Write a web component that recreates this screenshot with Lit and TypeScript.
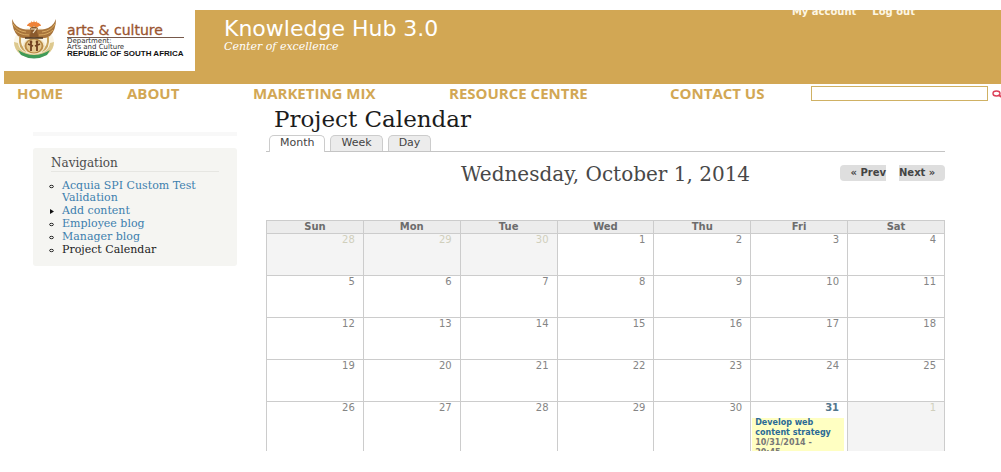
import { LitElement, html, css, svg } from "lit";
import { customElement } from "lit/decorators.js";
import { classMap } from "lit/directives/class-map.js";

interface Day {
  n: number;
  outside?: boolean;
  event?: { title: string; time: string };
}

const DAY_NAMES = ["Sun", "Mon", "Tue", "Wed", "Thu", "Fri", "Sat"];

function buildWeeks(): Day[][] {
  const days: Day[] = [28, 29, 30].map((n) => ({ n, outside: true }));
  for (let n = 1; n <= 31; n++) days.push({ n });
  days[days.length - 1].event = {
    title: "Develop web content strategy",
    time: "10/31/2014 - 20:45",
  };
  days.push({ n: 1, outside: true });
  const weeks: Day[][] = [];
  for (let i = 0; i < days.length; i += 7) weeks.push(days.slice(i, i + 7));
  return weeks;
}

@customElement("coat-of-arms")
class CoatOfArms extends LitElement {
  static styles = css`
    :host { display: block; }
    svg { display: block; width: 46px; height: 41px; }
  `;
  render() {
    const rays = [-75, -50, -25, 0, 25, 50, 75].map(
      (a) => svg`<path d="M21.500 5 L23 -1 L24.500 5 Z" transform="translate(0 3) rotate(${a} 23 6) " fill="#f08a34"/>`
    );
    return html`<svg viewBox="0 0 46 41" aria-hidden="true">
      <ellipse cx="23" cy="24" rx="20" ry="15" fill="#faf5e6"/>
      <path d="M3 24 C3 34 12 40 23 40 C34 40 43 34 43 24 L39 25 C38 32 32 36 23 36 C14 36 8 32 7 25 Z" fill="#ddc98e"/>
      <path d="M7 32 Q23 42 39 32 L36 37 Q23 44 10 37 Z" fill="#3f9a58"/>
      <path d="M9 19 Q8 30 15 33 M37 19 Q38 30 31 33" fill="none" stroke="#c9a45d" stroke-width="2"/>
      ${rays}<path d="M16 8 a7 4 0 0 1 14 0 Z" fill="#ee8238"/>
      <path d="M1 1 Q4 9 12 11 Q18 12 21 11 L22 19 Q13 22 7 18 Q1 12 1 1 Z" fill="#a8743b"/>
      <path d="M45 1 Q42 9 34 11 Q28 12 25 11 L24 19 Q33 22 39 18 Q45 12 45 1 Z" fill="#a8743b"/>
      <path d="M2 6 Q6 13 15 14 M4 12 Q9 17 18 17 M44 6 Q40 13 31 14 M42 12 Q37 17 28 17" fill="none" stroke="#d8ab62" stroke-width="1"/>
      <path d="M19 10 Q23 7 27 10 L26 13 L28 21 L18 21 L20 13 Z" fill="#8b5a2c"/>
      <path d="M20 11 L25 11 L22 15" fill="none" stroke="#f0dfc0" stroke-width="1.200"/>
      <ellipse cx="23" cy="28" rx="11" ry="8.500" fill="#f3e6c4"/>
      <ellipse cx="23" cy="28" rx="9.500" ry="7.500" fill="#b98a45"/>
      <ellipse cx="23" cy="28" rx="7.500" ry="6.500" fill="#e6c98f"/>
      <path d="M20 24 V33 M26 24 V33 M17 26 L22 28 M29 26 L24 28" stroke="#70401f" stroke-width="1.800"/>
      <circle cx="20" cy="24" r="1.400" fill="#70401f"/>
      <circle cx="26" cy="24" r="1.400" fill="#70401f"/>
      <path d="M14 20 H32" stroke="#4b3420" stroke-width="1.500"/>
    </svg>`;
  }
}

@customElement("site-header")
class SiteHeader extends LitElement {
  static styles = css`
    :host { display: block; font-family: "DejaVu Sans", sans-serif; }
    .banner { display: flex; background: #d2a754; margin-left: 4px; color: #fff; padding-bottom: 13px; overflow: hidden; }
    .logo { box-sizing: border-box; width: 191px; height: 61px; background: #fff; display: flex; gap: 10px; padding: 8px 0 0 7px; }
    .logo-text { color: #333; padding-top: 5px; white-space: nowrap; }
    .brand { font: 14px/14px "DejaVu Sans", sans-serif; color: #9a5430; -webkit-text-stroke: 0.3px #9a5430; border-bottom: 1px solid #76584a; margin-bottom: 1px; }
    .dept { display: block; font: 7px/5px "DejaVu Sans", sans-serif; padding-bottom: 1px; }
    .republic { font: bold 8px/6px "Liberation Sans", sans-serif; color: #111; }
    .site { flex: 1; padding: 8px 0 0 29px; }
    h1 { font-weight: normal; font-size: 22px; line-height: 22px; margin: 0 0 1px; }
    .slogan { font: italic 11px/12px "DejaVu Serif", serif; margin: 0; }
    .account { display: flex; gap: 16px; margin: -4px 86px 0 0; font-weight: bold; font-size: 10px; line-height: 12px; }
    .account a { color: #fdf6e4; text-decoration: none; }
    .menu { display: grid; grid-template-columns: 110fr 126fr 196fr 221fr 141fr 177fr 13px; align-items: center; padding-left: 17px; height: 19px; font: bold 15px/16px "Open Sans", sans-serif; }
    .menu a { color: #d2a754; text-decoration: none; white-space: nowrap; padding-bottom: 2px; }
    input { box-sizing: border-box; width: 100%; height: 15px; border: 1px solid #cfb164; background: #fff; padding: 0 4px; font-size: 10px; display: block; }
    button { border: 0; background: none; padding: 0 0 0 4px; overflow: hidden; display: block; height: 12px; }
    button svg { display: block; }
  `;
  render() {
    return html`
      <header class="banner">
        <div class="logo">
          <coat-of-arms></coat-of-arms>
          <div class="logo-text">
            <div class="brand">arts &amp; culture</div>
            <span class="dept">Department:</span>
            <span class="dept">Arts and Culture</span>
            <div class="republic">REPUBLIC OF SOUTH AFRICA</div>
          </div>
        </div>
        <div class="site">
          <h1>Knowledge Hub 3.0</h1>
          <p class="slogan">Center of excellence</p>
        </div>
        <nav class="account"><a href="#account">My account</a><a href="#logout">Log out</a></nav>
      </header>
      <nav class="menu">
        ${["HOME", "ABOUT", "MARKETING MIX", "RESOURCE CENTRE", "CONTACT US"].map(
          (t) => html`<a href="#">${t}</a>`
        )}
        <input type="text" aria-label="Search" />
        <button aria-label="Submit search">
          <svg width="12" height="12" viewBox="0 0 12 12"><ellipse cx="4.500" cy="5.500" rx="3.500" ry="2.500" fill="none" stroke="#dc4058" stroke-width="1.400"/><path d="M6.500 7 L11 10" stroke="#dc4058" stroke-width="2"/></svg>
        </button>
      </nav>`;
  }
}

@customElement("side-nav")
class SideNav extends LitElement {
  static styles = css`
    :host { display: block; font: 11px/12px "DejaVu Serif", serif; padding-top: 29px; }
    .rule { height: 4px; background: #f8f8f8; margin-bottom: 12px; }
    .box { background: #f5f5f2; border-radius: 3px; padding: 8px 18px 10px; }
    h2 { font-weight: normal; font-size: 12px; line-height: 15px; color: #4c4c4c; margin: 0; border-bottom: 1px solid #e6e6e2; }
    ul { list-style: none; margin: 8px -10px 0 -2px; padding: 0; }
    li { display: flex; gap: 8px; margin-bottom: 1px; }
    li:last-child { margin-bottom: 0; }
    li svg { flex: none; width: 5px; height: 12px; }
    a { color: #3d7fae; text-decoration: none; }
    a.active { color: #222; }
  `;
  render() {
    const items = ["Acquia SPI Custom Test Validation", "Add content", "Employee blog", "Manager blog", "Project Calendar"];
    return html`
      <div class="rule"></div>
      <nav class="box">
        <h2>Navigation</h2>
        <ul>
          ${items.map(
            (t, i) => html`<li>
              <svg viewBox="0 0 5 12" aria-hidden="true">
                ${i === 1
                  ? svg`<path d="M1 4 L5 6.500 L1 9 Z" fill="#111"/>`
                  : svg`<ellipse cx="2.500" cy="6.500" rx="1.900" ry="1.200" fill="none" stroke="#222"/>`}
              </svg>
              <a href="#" class=${classMap({ active: i === 4 })}>${t}</a>
            </li>`
          )}
        </ul>
      </nav>`;
  }
}

@customElement("month-calendar")
class MonthCalendar extends LitElement {
  static styles = css`
    :host { display: block; font: 10px/12px "DejaVu Sans", sans-serif; }
    h1 { font: 23px/28px "DejaVu Serif", serif; color: #1c1c1c; margin: 0; padding: 2px 0 2px 8px; }
    .tabs { display: flex; gap: 5px; padding-left: 3px; border-bottom: 1px solid #c4c4c4; }
    .tabs a { font-size: 11px; line-height: 14px; padding: 0 10px 1px; border: 1px solid #ccc; border-bottom: 0; border-radius: 5px 5px 0 0; background: #ececec; color: #444; text-decoration: none; }
    .tabs a.active { background: #fff; margin-bottom: -1px; padding-bottom: 2px; }
    .pager { display: grid; grid-template-columns: 105px 1fr 105px; align-items: start; padding: 8px 0 32px; }
    h2 { grid-column: 2; font: 20px/28px "DejaVu Serif", serif; color: #484848; margin: 0; text-align: center; white-space: nowrap; }
    .steps { display: flex; justify-content: space-between; padding-top: 5px; }
    .steps a { font-weight: bold; line-height: 16px; width: 46px; background: #dedede; color: #444; text-decoration: none; white-space: nowrap; text-align: right; border-radius: 4px 0 0 4px; }
    .steps a + a { text-align: left; border-radius: 0 4px 4px 0; }
    table { width: 100%; table-layout: fixed; border-collapse: collapse; }
    th { background: #ececec; color: #6c6c6c; border: 1px solid #ccc; padding: 0; height: 12px; line-height: 12px; }
    td { border: 1px solid #ccc; padding: 0; height: 41px; vertical-align: top; color: #858585; }
    td.outside { background: #f4f4f4; color: #d0cfbc; }
    tr.last td { height: 49px; border-bottom: 0; }
    .num { text-align: right; padding: 0 8px 0 0; }
    .num.linked { font-weight: bold; color: #52768c; }
    .event { margin: 4px 3px 0 1px; padding: 0 12px 0 3px; background: #ffffc2; font: bold 8px/10px "DejaVu Sans", sans-serif; color: #777; height: 33px; overflow: hidden; }
    .event a { color: #2a6a96; text-decoration: none; display: block; margin-right: -10px; padding-right: 10px; }
  `;
  render() {
    const weeks = buildWeeks();
    return html`
      <h1>Project Calendar</h1>
      <nav class="tabs">
        <a href="#month" class="active">Month</a><a href="#week">Week</a><a href="#day">Day</a>
      </nav>
      <div class="pager">
        <h2>Wednesday, October 1, 2014</h2>
        <nav class="steps"><a href="#prev">« Prev</a><a href="#next">Next »</a></nav>
      </div>
      <table>
        <thead><tr>${DAY_NAMES.map((d) => html`<th scope="col">${d}</th>`)}</tr></thead>
        <tbody>
          ${weeks.map(
            (w, i) => html`<tr class=${classMap({ last: i === weeks.length - 1 })}>
              ${w.map(
                (d) => html`<td class=${classMap({ outside: !!d.outside })}>
                  <div class=${classMap({ num: true, linked: !!d.event })}>${d.n}</div>
                  ${d.event
                    ? html`<div class="event"><a href="#event">${d.event.title}</a>${d.event.time}</div>`
                    : ""}
                </td>`
              )}
            </tr>`
          )}
        </tbody>
      </table>`;
  }
}

@customElement("app-root")
class AppRoot extends LitElement {
  static styles = css`
    :host { display: block; background: #fff; padding-top: 10px; min-height: calc(100vh - 10px); overflow: hidden; }
    .main { display: grid; grid-template-columns: 204px 1fr; gap: 29px; padding: 0 56px 0 33px; align-items: start; }
  `;
  render() {
    return html`
      <site-header></site-header>
      <main class="main">
        <side-nav></side-nav>
        <month-calendar></month-calendar>
      </main>`;
  }
}
